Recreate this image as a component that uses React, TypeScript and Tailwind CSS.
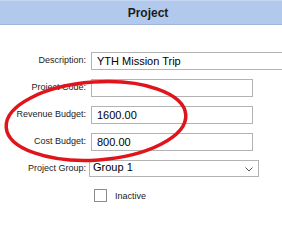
const font = { fontFamily: '"Liberation Sans", Arial, sans-serif' };

type Row = { label: string; value: string; wide?: boolean };

const rows: Row[] = [
  { label: "Description:", value: "YTH Mission Trip", wide: true },
  { label: "Project Code:", value: "" },
  { label: "Revenue Budget:", value: "1600.00" },
  { label: "Cost Budget:", value: "800.00" },
];

export default function App() {
  return (
    <div className="relative w-[282px] h-[241px] overflow-hidden bg-white" style={font}>
      {/* Header */}
      <div className="h-[25px] bg-[#b2c9ed] border-t border-[#c3d5f1] border-b border-b-[#9eb6e0] flex items-center justify-center pl-[14px]">
        <span className="text-[12px] font-bold text-[#1b1b1b]">Project</span>
      </div>

      {/* Form */}
      <div className="pt-[27px] flex flex-col gap-[9px]">
        {rows.map((row) => (
          <div key={row.label} className="flex items-center h-[18px]">
            <span className="w-[86px] shrink-0 text-right text-[9px] text-[#222]">{row.label}</span>
            <div
              className={`ml-[5px] h-[18px] shrink-0 border border-[#b3b3b3] bg-white flex items-center pl-[5px] text-[11px] text-black ${
                row.wide ? "w-[220px]" : "w-[162px]"
              }`}
            >
              {row.value}
            </div>
          </div>
        ))}

        <div className="flex items-center h-[17px]">
          <span className="w-[86px] shrink-0 text-right text-[9px] text-[#222]">Project Group:</span>
          <div className="ml-[3px] w-[170px] h-[17px] shrink-0 border border-[#b3b3b3] bg-white flex items-center justify-between pl-[3px] pr-[5px]">
            <span className="text-[11px] leading-none text-black -mt-[2px]">Group 1</span>
            <svg width="8" height="5" viewBox="0 0 8 5" className="mt-[1px]">
              <path d="M0.5 0.5 L4 4 L7.5 0.5" fill="none" stroke="#555" strokeWidth="1" />
            </svg>
          </div>
        </div>

        <div className="flex items-center pl-[94px] pt-[1px]">
          <div className="w-[13px] h-[13px] border border-[#8c8c8c] bg-white" />
          <span className="ml-[8px] mt-[3px] text-[9px] text-[#222]">Inactive</span>
        </div>
      </div>

      {/* Red annotation */}
      <svg className="absolute left-0 top-0 pointer-events-none" width="282" height="241">
        <ellipse
          cx="96"
          cy="121"
          rx="90"
          ry="39"
          transform="rotate(-4 96 121)"
          fill="none"
          stroke="#e0141b"
          strokeWidth="3.5"
        />
      </svg>
    </div>
  );
}
